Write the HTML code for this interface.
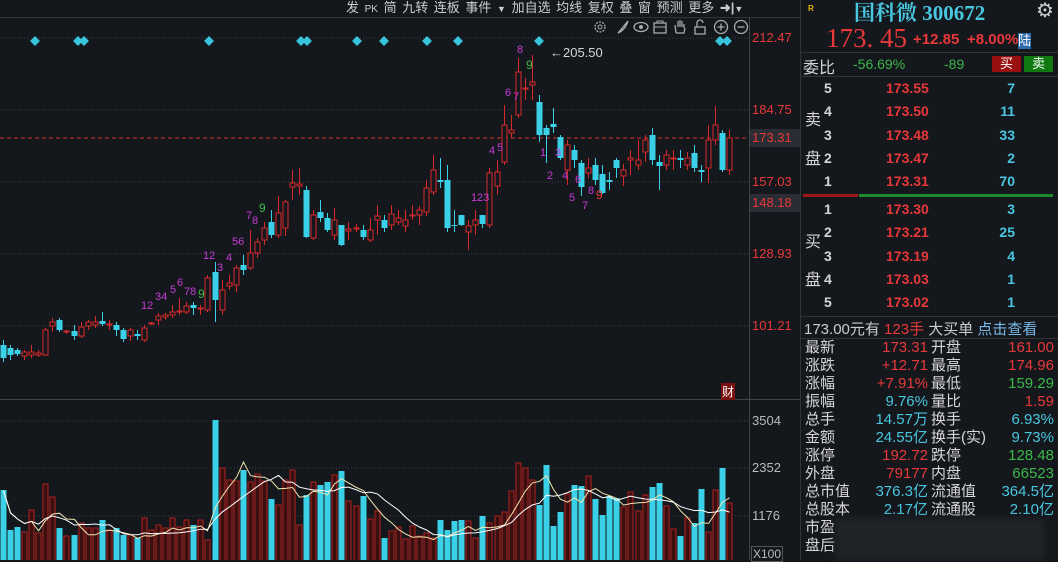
<!DOCTYPE html><html><head><meta charset="utf-8"><style>
body{margin:0;background:#14171c;width:1058px;height:560px;overflow:hidden;position:relative;font-family:"Liberation Sans","Noto Sans CJK SC",sans-serif;}
.a{position:absolute;white-space:nowrap;}
.r{color:#e8393a}.g{color:#3cb84a}.c{color:#49c7e0}.w{color:#d6d6d6}.p{color:#c83cd8}
.rp .a{font-size:15px;line-height:18px}
#ob .a{font-weight:bold}
</style></head><body>
<svg id="sv" width="1058" height="560" style="position:absolute;left:0;top:0"></svg>
<div class="a w" style="left:346px;top:-3px;font-size:13px;word-spacing:2px;color:#ccc">发 <span style="font-size:10px">PK</span> 简 九转 连板 事件 <span style="font-size:9px">▼</span> 加自选 均线 复权 叠 窗 预测 更多 <b>➜|</b><span style="font-size:9px">▼</span></div>
<div class="a r" style="left:752px;top:30px;font-size:13px">212.47</div>
<div class="a r" style="left:752px;top:102px;font-size:13px">184.75</div>
<div class="a" style="left:750px;top:129px;width:50px;height:18px;background:#2a2d33"></div>
<div class="a r" style="left:752px;top:130px;font-size:13px">173.31</div>
<div class="a r" style="left:752px;top:174px;font-size:13px">157.03</div>
<div class="a" style="left:750px;top:194px;width:50px;height:18px;background:#2a2d33"></div>
<div class="a r" style="left:752px;top:195px;font-size:13px">148.18</div>
<div class="a r" style="left:752px;top:246px;font-size:13px">128.93</div>
<div class="a r" style="left:752px;top:318px;font-size:13px">101.21</div>
<div class="a w" style="left:752px;top:413px;font-size:13px;color:#bbb">3504</div>
<div class="a w" style="left:752px;top:460px;font-size:13px;color:#bbb">2352</div>
<div class="a w" style="left:752px;top:508px;font-size:13px;color:#bbb">1176</div>
<div class="a w" style="left:751px;top:546px;font-size:12px;color:#bbb;border:1px solid #555;padding:0 1px">X100</div>
<div class="a" style="left:721px;top:383px;font-size:12px;color:#fff;background:#7a1010;padding:0 1px">财</div>
<div class="a w" style="left:550px;top:45px;font-size:13px">←205.50</div>
<div class="p" style="font-size:11px">
<span class="a" style="left:517px;top:44px">8</span><span class="a g" style="left:526px;top:58px;font-size:12px">9</span>
<span class="a" style="left:505px;top:87px">6</span><span class="a" style="left:513px;top:91px">7</span>
<span class="a" style="left:489px;top:145px">4</span><span class="a" style="left:497px;top:142px">5</span>
<span class="a" style="left:471px;top:192px">1</span><span class="a" style="left:477px;top:192px">23</span>
<span class="a" style="left:540px;top:147px">1</span><span class="a" style="left:547px;top:170px">2</span><span class="a" style="left:555px;top:147px">3</span><span class="a" style="left:562px;top:170px">4</span><span class="a" style="left:569px;top:192px">5</span><span class="a" style="left:575px;top:174px">6</span><span class="a" style="left:582px;top:200px">7</span><span class="a" style="left:588px;top:185px">8</span><span class="a r" style="left:596px;top:188px;font-size:12px">9</span>
<span class="a" style="left:141px;top:300px">12</span><span class="a" style="left:155px;top:291px">34</span><span class="a" style="left:170px;top:284px">5</span><span class="a" style="left:177px;top:277px">6</span><span class="a" style="left:184px;top:286px">78</span><span class="a g" style="left:198px;top:287px;font-size:12px">9</span>
<span class="a" style="left:203px;top:250px">12</span><span class="a" style="left:217px;top:262px">3</span><span class="a" style="left:226px;top:252px">4</span><span class="a" style="left:232px;top:236px">56</span><span class="a" style="left:246px;top:210px">7</span><span class="a" style="left:252px;top:215px">8</span><span class="a g" style="left:259px;top:201px;font-size:12px">9</span>
</div>
<div class="a" style="left:800px;top:0;width:1px;height:560px;background:#333"></div>
<div class="a" style="left:808px;top:4px;font-size:8px;color:#e6b800;font-weight:bold">R</div>
<div class="a c" style="left:854px;top:-3px;font-size:21px;font-family:'Liberation Serif','Noto Serif CJK SC',serif;font-weight:bold">国科微 300672</div>
<div class="a" style="left:1036px;top:-2px;font-size:20px;color:#ccc">⚙</div>
<div class="a r" style="left:826px;top:23px;font-size:27px;font-family:'Liberation Serif',serif">173. 45</div>
<div class="a r" style="left:913px;top:31px;font-size:15px;font-weight:bold">+12.85</div>
<div class="a r" style="left:967px;top:31px;font-size:15px;font-weight:bold">+8.00%</div>
<div class="a" style="left:1018px;top:33px;font-size:13px;background:#2d6aa8;color:#fff;line-height:16px">陆</div>
<div class="a" style="left:801px;top:52px;width:257px;height:1px;background:#333"></div>
<div class="a w" style="left:803px;top:54px;font-size:16px">委比</div>
<div class="a g" style="left:853px;top:56px;font-size:14px">-56.69%</div>
<div class="a g" style="left:944px;top:56px;font-size:14px">-89</div>
<div class="a" style="left:992px;top:56px;width:29px;height:16px;background:#9a1010;color:#fff;font-size:13px;text-align:center;line-height:16px">买</div>
<div class="a" style="left:1024px;top:56px;width:29px;height:16px;background:#107a10;color:#fff;font-size:13px;text-align:center;line-height:16px">卖</div>
<div class="a" style="left:801px;top:76px;width:257px;height:1px;background:#333"></div>
<div class="a w" style="left:805px;top:106px;font-size:16px">卖</div>
<div class="a w" style="left:805px;top:145px;font-size:16px">盘</div>
<div class="a w" style="left:805px;top:228px;font-size:16px">买</div>
<div class="a w" style="left:805px;top:266px;font-size:16px">盘</div>
<div id="ob" style="font-size:14px"></div>
<div class="a" style="left:803px;top:194px;width:55px;height:3px;background:#a01818"></div>
<div class="a" style="left:859px;top:194px;width:194px;height:3px;background:#1c8c2a"></div>
<div class="a" style="left:801px;top:316px;width:257px;height:1px;background:#333"></div>
<div class="a" style="left:804px;top:318px;font-size:15px;color:#ccc">173.00元有 <span class="r">123手</span> 大买单 <span style="color:#7ab8e8">点击查看</span></div>
<div class="a" style="left:801px;top:338px;width:257px;height:1px;background:#333"></div>
<div id="st" class="rp"></div>
<script>
var ns="http://www.w3.org/2000/svg",sv=document.getElementById('sv');
function el(t,a){var e=document.createElementNS(ns,t);for(var k in a)e.setAttribute(k,a[k]);sv.appendChild(e);return e;}
[38,110,182,254,326].forEach(function(y){el('line',{x1:0,x2:748,y1:y,y2:y,stroke:'#3a3d44','stroke-dasharray':'1,2'})});
[421,468,516].forEach(function(y){el('line',{x1:0,x2:748,y1:y,y2:y,stroke:'#3a3d44','stroke-dasharray':'1,2'})});
el('line',{x1:0,x2:800,y1:138,y2:138,stroke:'#d83030','stroke-dasharray':'4,3'});
el('line',{x1:0,x2:800,y1:399.5,y2:399.5,stroke:'#444'});
el('line',{x1:749.5,x2:749.5,y1:18,y2:560,stroke:'#444'});
el('line',{x1:0,x2:800,y1:17.5,y2:17.5,stroke:'#333'});
[35,78,84,209,301,307,357,384,427,458,539,720,727].forEach(function(x){el('rect',{x:x-3.5,y:37.5,width:7,height:7,fill:'#38c4dc',transform:'rotate(45 '+x+' 41)'})});
var ix=[600,623,641,660,680,700,721,741];
ix.forEach(function(x,i){var s='#aaa';
if(i==0){el('circle',{cx:x,cy:27,r:5,fill:'none',stroke:s,'stroke-width':1.3,'stroke-dasharray':'2,1.2'});el('circle',{cx:x,cy:27,r:2,fill:'none',stroke:s});}
if(i==1)el('path',{d:'M'+(x-5)+' 33 L'+(x+5)+' 21 Q'+(x+2)+' 30 '+(x-5)+' 33',fill:'none',stroke:s,'stroke-width':1.3});
if(i==2){el('ellipse',{cx:x,cy:27,rx:7,ry:4.5,fill:'none',stroke:s,'stroke-width':1.3});el('circle',{cx:x,cy:27,r:2,fill:s});}
if(i==3){el('rect',{x:x-6,y:23,width:12,height:10,fill:'none',stroke:s,'stroke-width':1.3});el('path',{d:'M'+(x-3)+' 23 v-2 h6 v2 M'+(x-6)+' 27 h12',fill:'none',stroke:s});}
if(i==4)el('path',{d:'M'+(x-4)+' 33 L'+(x-5)+' 25 M'+(x-2)+' 27 v-6 M'+x+' 27 v-7 M'+(x+2)+' 27 v-6 M'+(x+4)+' 28 v-4 M'+(x-4)+' 33 h8 l1 -5',fill:'none',stroke:s,'stroke-width':1.3});
if(i==5){el('rect',{x:x-5,y:27,width:10,height:7,fill:'none',stroke:s,'stroke-width':1.3});el('path',{d:'M'+(x-3)+' 27 v-4 a3 3 0 0 1 6 0',fill:'none',stroke:s,'stroke-width':1.3});}
if(i>=6){el('circle',{cx:x,cy:27,r:6.5,fill:'none',stroke:s,'stroke-width':1.3});el('path',{d:'M'+(x-3.5)+' 27 h7'+(i==6?' M'+x+' 23.5 v7':''),stroke:s,'stroke-width':1.3});}
});
var C=[[345,358,340,362],[348,355,345,360],[350,354,348,356],[356,352,350,360],[355,352,345,358],[355,353,350,357],[355,330,328,356],[326,322,318,332],[320,330,318,332],[332,331,330,334],[331,336,325,340],[336,327,322,338],[326,322,320,330],[325,322,316,328],[321,324,312,326],[324,324,320,330],[325,330,322,336],[330,339,328,342],[336,330,328,341],[334,336,330,340],[340,328,325,342],[323,323,322,325],[320,316,313,325],[317,315,313,320],[315,312,305,318],[311,311,298,315],[312,306,302,314],[305,308,302,315],[308,308,305,315],[310,278,275,312],[272,300,262,322],[310,290,280,315],[286,283,275,290],[285,268,265,292],[265,270,255,275],[268,253,230,270],[253,242,238,258],[240,228,222,245],[222,235,210,238],[235,213,196,238],[228,202,200,236],[187,183,170,200],[186,184,168,195],[190,237,186,238],[238,215,210,240],[212,218,200,222],[218,230,213,232],[235,220,208,240],[225,245,225,246],[231,229,222,240],[229,228,224,232],[230,237,225,240],[240,230,218,242],[220,216,205,235],[220,228,215,232],[225,214,205,230],[222,218,210,225],[226,220,210,232],[216,215,205,220],[215,210,206,225],[212,188,180,216],[192,170,155,195],[180,182,158,188],[180,228,165,232],[225,226,210,232],[215,225,215,226],[232,226,220,250],[225,220,210,235],[215,224,215,228],[225,173,168,228],[186,172,160,195],[162,125,105,165],[133,130,115,138],[115,72,58,118],[89,88,78,100],[85,82,55,100],[102,135,95,142],[128,135,125,163],[124,127,108,133],[137,158,135,160],[170,145,140,185],[150,160,145,168],[163,187,160,196],[173,168,158,178],[165,180,158,185],[174,193,165,194],[180,182,172,190],[160,168,158,178],[176,170,164,186],[160,158,150,175],[165,160,140,170],[152,140,135,162],[135,160,128,165],[162,166,155,190],[165,155,150,170],[159,158,150,170],[158,160,150,168],[165,158,152,170],[153,168,145,172],[170,172,165,182],[168,140,125,183],[140,125,106,145],[133,170,130,172],[170,138,130,175]];
var V=[490,530,527,532,510,533,484,497,528,536,535,523,528,528,520,530,528,535,535,538,518,530,525,528,518,527,520,525,520,540,420,468,480,481,470,482,474,481,499,505,480,470,525,495,482,485,482,475,471,501,506,496,519,511,538,531,527,539,526,536,533,538,520,530,521,520,521,538,516,523,516,512,491,463,468,480,505,465,526,512,494,485,486,476,499,515,496,498,507,492,511,495,487,483,506,529,536,518,523,489,532,490,468,503];
var R='#d82a2a',B='#3ad0e8',xs=[];
C.forEach(function(c,i){var x=Math.round(3+7.05*i)+0.5;xs.push(x);var up=c[1]<=c[0];var col=up?R:B;
el('line',{x1:x,x2:x,y1:c[2],y2:c[3],stroke:col});
var t=Math.min(c[0],c[1]),h=Math.max(1,Math.abs(c[0]-c[1]));
if(up)el('rect',{x:x-2.5,y:t,width:5,height:h,fill:'#14171c',stroke:col});else el('rect',{x:x-3,y:t,width:6,height:h,fill:col});
var vt=V[i]||520;if(up)el('rect',{x:x-2.5,y:vt,width:5,height:562-vt,fill:'#3a0f10',stroke:'#b02020'});else el('rect',{x:x-3,y:vt,width:6,height:562-vt,fill:B});
});
function ma(n,col){var p='';for(var i=0;i<V.length;i++){var s=0,k=0;for(var j=Math.max(0,i-n+1);j<=i;j++){s+=562-V[j];k++;}var y=562-s/k*1.1+8;p+=(i?'L':'M')+xs[i]+' '+y.toFixed(1);}el('path',{d:p,fill:'none',stroke:col,'stroke-width':1});}
ma(5,'#f0e6b0');ma(10,'#ffffff');
var ob='',sell=[[5,'173.55',7],[4,'173.50',11],[3,'173.48',33],[2,'173.47',2],[1,'173.31',70]],buy=[[1,'173.30',3],[2,'173.21',25],[3,'173.19',4],[4,'173.03',1],[5,'173.02',1]];
sell.forEach(function(r,i){var y=80+i*23.3;ob+='<div class="a w" style="left:824px;top:'+y+'px">'+r[0]+'</div><div class="a r" style="left:886px;top:'+y+'px">'+r[1]+'</div><div class="a c" style="left:960px;width:55px;text-align:right;top:'+y+'px">'+r[2]+'</div>';});
buy.forEach(function(r,i){var y=201+i*23.3;ob+='<div class="a w" style="left:824px;top:'+y+'px">'+r[0]+'</div><div class="a r" style="left:886px;top:'+y+'px">'+r[1]+'</div><div class="a c" style="left:960px;width:55px;text-align:right;top:'+y+'px">'+r[2]+'</div>';});
document.getElementById('ob').innerHTML=ob;
var S=[['最新','173.31','r','开盘','161.00','r'],['涨跌','+12.71','r','最高','174.96','r'],['涨幅','+7.91%','r','最低','159.29','g'],['振幅','9.76%','c','量比','1.59','r'],['总手','14.57万','c','换手','6.93%','c'],['金额','24.55亿','c','换手(实)','9.73%','c'],['涨停','192.72','r','跌停','128.48','g'],['外盘','79177','r','内盘','66523','g'],['总市值','376.3亿','c','流通值','364.5亿','c'],['总股本','2.17亿','c','流通股','2.10亿','c'],['市盈','','c','','','c'],['盘后','','c','','','c']];
var h='';S.forEach(function(r,i){var y=339+i*18;h+='<div class="a w" style="left:805px;top:'+y+'px">'+r[0]+'</div><div class="a '+r[2]+'" style="left:860px;width:68px;text-align:right;top:'+y+'px">'+r[1]+'</div><div class="a w" style="left:931px;top:'+y+'px">'+r[3]+'</div><div class="a '+r[5]+'" style="left:980px;width:74px;text-align:right;top:'+y+'px">'+r[4]+'</div>';});
document.getElementById('st').innerHTML=h;
</script>
<div class="a" style="left:835px;top:518px;width:210px;height:42px;background:#2a2d32;opacity:.55;filter:blur(4px)"></div>
</body></html>
